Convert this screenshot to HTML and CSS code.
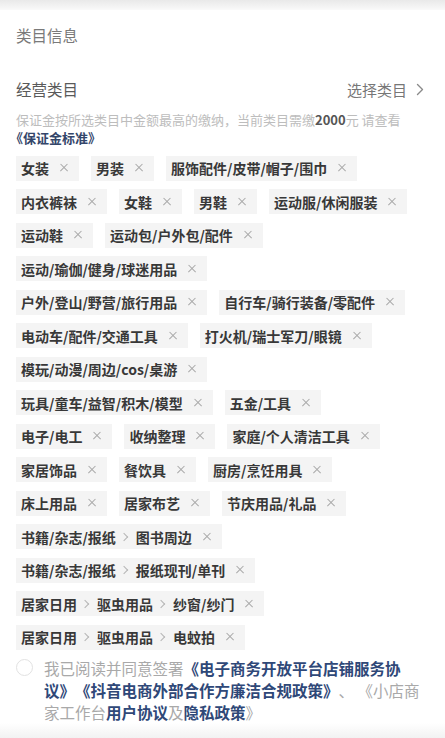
FILE: index.html
```html
<!DOCTYPE html>
<html lang="zh-CN">
<head>
<meta charset="utf-8">
<title>类目信息</title>
<link rel="stylesheet" href="styles.css">
</head>
<body>
<div class="topbar"></div>
<main class="card">
  <h1 class="title">类目信息</h1>
  <div class="section-head">
    <span class="section-label">经营类目</span>
    <span class="select">选择类目
      <svg class="chev" width="8" height="13" viewBox="0 0 8 13"><path d="M1.5 1.5 L6.5 6.5 L1.5 11.5" fill="none" stroke="#8a8a8a" stroke-width="1.4" stroke-linecap="round" stroke-linejoin="round"/></svg>
    </span>
  </div>
  <p class="notice">保证金按所选类目中金额最高的缴纳，当前类目需缴<b class="amount">2000</b>元 请查看<br><a class="notice-link">《保证金标准》</a></p>

  <ul class="tags">
    <li class="tag">女装<i class="x"></i></li>
    <li class="tag">男装<i class="x"></i></li>
    <li class="tag">服饰配件/皮带/帽子/围巾<i class="x"></i></li>
    <li class="tag">内衣裤袜<i class="x"></i></li>
    <li class="tag">女鞋<i class="x"></i></li>
    <li class="tag">男鞋<i class="x"></i></li>
    <li class="tag">运动服/休闲服装<i class="x"></i></li>
    <li class="tag">运动鞋<i class="x"></i></li>
    <li class="tag">运动包/户外包/配件<i class="x"></i></li>
    <li class="tag">运动/瑜伽/健身/球迷用品<i class="x"></i></li>
    <li class="tag">户外/登山/野营/旅行用品<i class="x"></i></li>
    <li class="tag">自行车/骑行装备/零配件<i class="x"></i></li>
    <li class="tag">电动车/配件/交通工具<i class="x"></i></li>
    <li class="tag">打火机/瑞士军刀/眼镜<i class="x"></i></li>
    <li class="tag">模玩/动漫/周边/cos/桌游<i class="x"></i></li>
    <li class="tag">玩具/童车/益智/积木/模型<i class="x"></i></li>
    <li class="tag">五金/工具<i class="x"></i></li>
    <li class="tag">电子/电工<i class="x"></i></li>
    <li class="tag">收纳整理<i class="x"></i></li>
    <li class="tag">家庭/个人清洁工具<i class="x"></i></li>
    <li class="tag">家居饰品<i class="x"></i></li>
    <li class="tag">餐饮具<i class="x"></i></li>
    <li class="tag">厨房/烹饪用具<i class="x"></i></li>
    <li class="tag">床上用品<i class="x"></i></li>
    <li class="tag">居家布艺<i class="x"></i></li>
    <li class="tag">节庆用品/礼品<i class="x"></i></li>
    <li class="tag">书籍/杂志/报纸<i class="sep"></i>图书周边<i class="x"></i></li>
    <li class="tag">书籍/杂志/报纸<i class="sep"></i>报纸现刊/单刊<i class="x"></i></li>
    <li class="tag">居家日用<i class="sep"></i>驱虫用品<i class="sep"></i>纱窗/纱门<i class="x"></i></li>
    <li class="tag">居家日用<i class="sep"></i>驱虫用品<i class="sep"></i>电蚊拍<i class="x"></i></li>
  </ul>

  <div class="agree">
    <span class="radio"></span>
    <p class="agree-text">我已阅读并同意签署<a class="lk">《电子商务开放平台店铺服务协<br>议》《抖音电商外部合作方廉洁合规政策》</a>、 《小店商<br>家工作台<a class="lk">用户协议</a>及<a class="lk">隐私政策</a>》</p>
  </div>
</main>
<div class="bottom-fade"></div>
</body>
</html>
```

FILE: styles.css
```css
* { box-sizing: border-box; }
html, body { margin: 0; padding: 0; }
body {
  background: #fff;
  font-family: "Noto Sans CJK SC", "Noto Sans", sans-serif;
  color: #222;
  width: 445px;
  height: 738px;
  overflow: hidden;
  display: flex;
  flex-direction: column;
  text-spacing-trim: space-all;
}
.topbar {
  height: 10px;
  background: linear-gradient(#e9e9e9, #f4f4f4 70%, #fafafa);
  flex: none;
}
.card {
  padding: 0 16px;
  flex: none;
}
.title {
  margin: 14px 0 0;
  font-size: 15.5px;
  line-height: 22px;
  font-weight: 400;
  color: #7a7a7a;
}
.section-head {
  margin-top: 32px;
  display: flex;
  justify-content: space-between;
  align-items: center;
  height: 22px;
}
.section-label {
  font-size: 15.5px;
  color: #5a5a5a;
}
.select {
  display: flex;
  align-items: center;
  gap: 9px;
  font-size: 15px;
  color: #777;
  margin-right: 5px;
}
.chev { display: block; }
.notice {
  margin: 11px 0 0;
  font-size: 13px;
  line-height: 18px;
  color: #bdbdbd;
}
.amount {
  font-weight: 700;
  color: #555;
}
.notice-link {
  color: #34466a;
  font-weight: 700;
  margin-left: -6px;
}
.tags {
  list-style: none;
  margin: 8.5px 20px 0 0;
  padding: 0;
  display: flex;
  flex-wrap: wrap;
  column-gap: 12px;
  row-gap: 8.5px;
}
.tag {
  height: 25px;
  display: flex;
  align-items: center;
  padding: 0 10px 0 5px;
  background: #f4f4f4;
  font-size: 14px;
  font-weight: 700;
  color: #383838;
  white-space: nowrap;
}
.x {
  width: 10px;
  height: 10px;
  margin-left: 10px;
  position: relative;
  flex: none;
}
.x::before, .x::after {
  content: "";
  position: absolute;
  left: 0;
  top: 4.3px;
  width: 10px;
  height: 1.3px;
  background: #a8a8a8;
  transform: rotate(45deg);
}
.x::after { transform: rotate(-45deg); }
.sep {
  width: 5px;
  height: 9px;
  margin: 0 8px 0 7px;
  position: relative;
  flex: none;
}
.sep::before {
  content: "";
  position: absolute;
  left: -2px;
  top: 1.6px;
  width: 5px;
  height: 5px;
  border-right: 1.2px solid #b5b5b5;
  border-top: 1.2px solid #b5b5b5;
  transform: rotate(45deg);
}
.agree {
  margin-top: 7.5px;
  display: flex;
  align-items: flex-start;
  gap: 11px;
}
.radio {
  flex: none;
  width: 17px;
  height: 17px;
  margin-top: 2px;
  border-radius: 50%;
  border: 1.5px solid #e2e2e2;
  background: #fff;
}
.agree-text {
  margin: 0;
  font-size: 15.5px;
  line-height: 22px;
  color: #a9a9a9;
  white-space: nowrap;
}
.lk {
  color: #2f4878;
  font-weight: 700;
}
.bottom-fade {
  flex: 1;
  background: linear-gradient(#fff, #f2f2f2);
}
```
